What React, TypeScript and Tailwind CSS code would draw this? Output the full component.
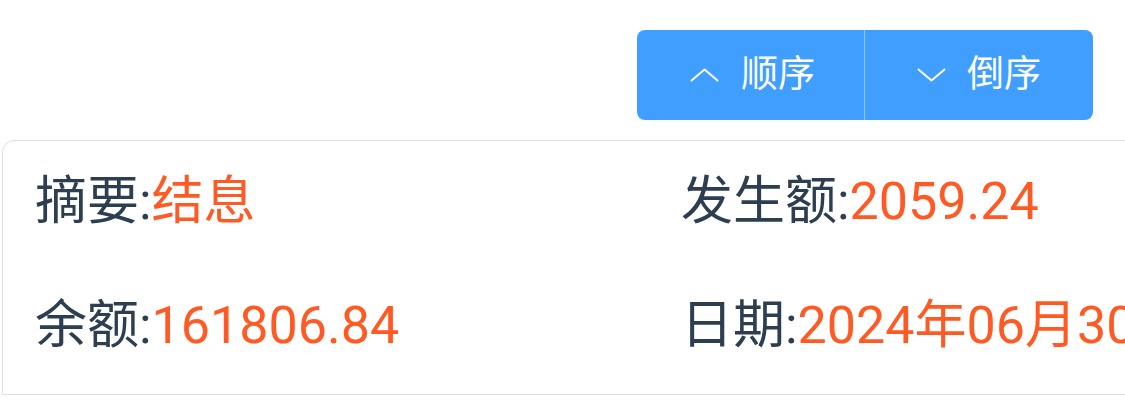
const ORANGE = "text-[#ff5a23]";

type Field = { label: string; value: string };

const rows: [Field, Field][] = [
  [
    { label: "摘要", value: "结息" },
    { label: "发生额", value: "2059.24" },
  ],
  [
    { label: "余额", value: "161806.84" },
    { label: "日期", value: "2024年06月30日" },
  ],
];

function Chevron({ up }: { up?: boolean }) {
  return (
    <svg width="29" height="14" viewBox="0 0 29 14" fill="none" className="shrink-0">
      <polyline
        points={up ? "1.5,12.5 14.5,1.5 27.5,12.5" : "1.5,1.5 14.5,12.5 27.5,1.5"}
        stroke="white"
        strokeWidth="2"
        strokeLinecap="round"
        strokeLinejoin="round"
      />
    </svg>
  );
}

function Cell({ f }: { f: Field }) {
  return (
    <div className="whitespace-nowrap">
      <span className="text-[#2c3e50]">{f.label}:</span>
      <span className={ORANGE}>{f.value}</span>
    </div>
  );
}

export default function App() {
  return (
    <div
      className="w-[1125px] h-[403px] overflow-hidden bg-white"
      style={{ fontFamily: 'Roboto, "Noto Sans CJK SC", sans-serif' }}
    >
      <div className="flex justify-end pt-[30px] pr-[32px]">
        <div className="flex h-[90px] overflow-hidden rounded-[8px] bg-[#409eff] text-[37px] text-white">
          <button className="flex w-[227px] items-center justify-center gap-[22px] pl-[4px]">
            <Chevron up />
            <span>顺序</span>
          </button>
          <div className="w-px bg-[#8cc5ff]" />
          <button className="flex w-[228px] items-center justify-center gap-[21px]">
            <Chevron />
            <span>倒序</span>
          </button>
        </div>
      </div>

      <div className="mt-[20px] ml-[2px] w-[1200px] rounded-tl-[12px] border border-[#dcdfe6] pl-[32px] pt-[30px] pb-[37px] text-[52px] leading-[62px]">
        <div className="flex flex-col gap-[62px]">
          {rows.map((r, i) => (
            <div key={i} className="flex">
              <div className="w-[646px]">
                <Cell f={r[0]} />
              </div>
              <Cell f={r[1]} />
            </div>
          ))}
        </div>
      </div>
    </div>
  );
}
